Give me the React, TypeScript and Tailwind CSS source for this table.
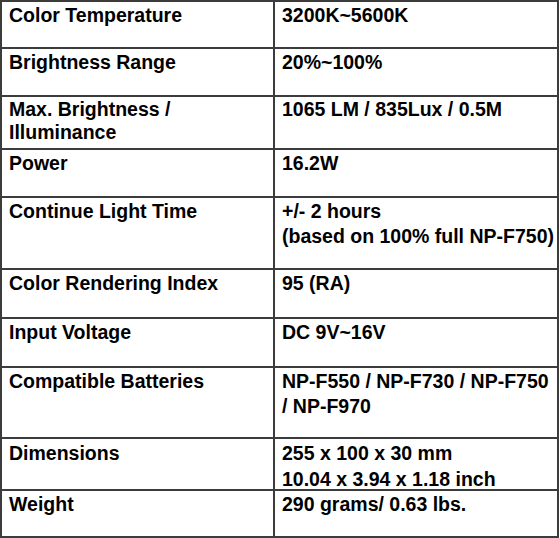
import { Fragment } from "react";

const rows: { label: string[]; value: string[]; h: string; lead?: string }[] = [
  { label: ["Color Temperature"], value: ["3200K~5600K"], h: "h-[47px]" },
  { label: ["Brightness Range"], value: ["20%~100%"], h: "h-[48px]" },
  {
    label: ["Max. Brightness /", "Illuminance"],
    value: ["1065 LM / 835Lux / 0.5M"],
    h: "h-[53px]",
    lead: "leading-[23px]",
  },
  { label: ["Power"], value: ["16.2W"], h: "h-[48px]" },
  {
    label: ["Continue Light Time"],
    value: ["+/- 2 hours", "(based on 100% full NP-F750)"],
    h: "h-[72px]",
  },
  { label: ["Color Rendering Index"], value: ["95 (RA)"], h: "h-[49px]" },
  { label: ["Input Voltage"], value: ["DC 9V~16V"], h: "h-[49px]" },
  {
    label: ["Compatible Batteries"],
    value: ["NP-F550 / NP-F730 / NP-F750", "/ NP-F970"],
    h: "h-[71px]",
  },
  {
    label: ["Dimensions"],
    value: ["255 x 100 x 30 mm", "10.04 x 3.94 x 1.18 inch"],
    h: "h-[52px]",
    lead: "leading-[26px]",
  },
  { label: ["Weight"], value: ["290 grams/ 0.63 lbs."], h: "h-[47px]" },
];

export default function App() {
  return (
    <div className="w-[560px] h-[538px] bg-white">
      <div
        className="grid grid-cols-[273px_284px] w-[559px] border-l-2 border-t-2 border-[#3c3c3c] text-black font-bold text-[19.5px]"
        style={{ fontFamily: '"Liberation Sans", Arial, sans-serif' }}
      >
        {rows.map((r) => (
          <Fragment key={r.label[0]}>
            {/* spec name */}
            <div
              className={`${r.h} ${r.lead ?? "leading-[25px]"} border-r-2 border-b-2 border-[#3c3c3c] pl-[7px] pt-[1px] overflow-hidden`}
            >
              {r.label.map((t) => (
                <div key={t}>{t}</div>
              ))}
            </div>
            {/* spec value */}
            <div
              className={`${r.h} ${r.lead ?? "leading-[25px]"} border-r-2 border-b-2 border-[#3c3c3c] pl-[7px] pt-[1px] overflow-hidden`}
            >
              {r.value.map((t) => (
                <div key={t}>{t}</div>
              ))}
            </div>
          </Fragment>
        ))}
      </div>
    </div>
  );
}
